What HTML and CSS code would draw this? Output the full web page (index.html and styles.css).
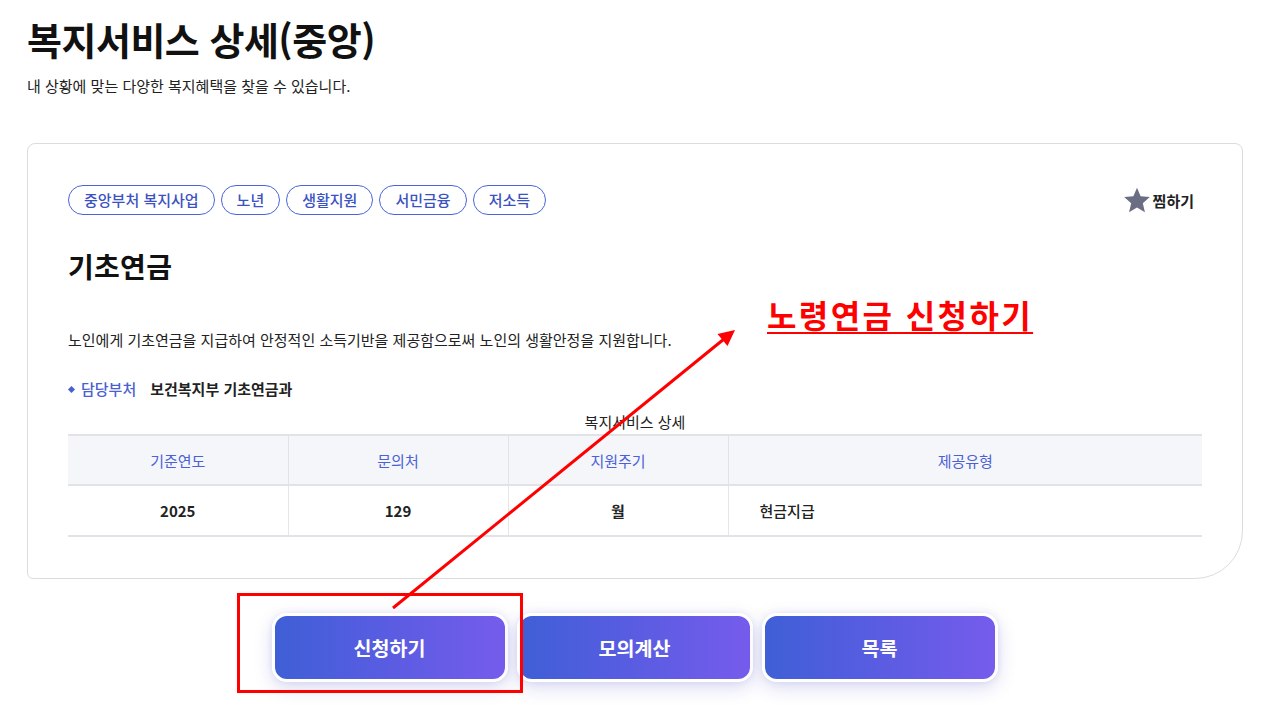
FILE: index.html
```html
<!DOCTYPE html>
<html lang="ko">
<head>
<meta charset="utf-8">
<title>복지서비스 상세(중앙)</title>
<link rel="stylesheet" href="styles.css">
</head>
<body>
<div class="page">
  <header class="head">
    <h1 class="title">복지서비스 상세(중앙)</h1>
    <p class="subtitle">내 상황에 맞는 다양한 복지혜택을 찾을 수 있습니다.</p>
  </header>

  <section class="card">
    <div class="card-top">
      <ul class="tags">
        <li class="tag">중앙부처 복지사업</li>
        <li class="tag">노년</li>
        <li class="tag">생활지원</li>
        <li class="tag">서민금융</li>
        <li class="tag">저소득</li>
      </ul>
      <button class="wish" type="button">
        <svg class="star" viewBox="0 0 24 24" width="28" height="28"><path d="M12 1.5l3.1 7.3 7.9.7-6 5.2 1.8 7.8L12 18.4l-6.8 4.1L7 14.7 1 9.5l7.9-.7z" fill="#6b6e82"/></svg>
        <span>찜하기</span>
      </button>
    </div>

    <h2 class="svc-name">기초연금</h2>
    <p class="desc">노인에게 기초연금을 지급하여 안정적인 소득기반을 제공함으로써 노인의 생활안정을 지원합니다.</p>

    <div class="dept">
      <span class="dept-label">담당부처</span>
      <span class="dept-value">보건복지부 기초연금과</span>
    </div>

    <table class="info">
      <caption>복지서비스 상세</caption>
      <thead>
        <tr>
          <th class="c1">기준연도</th>
          <th class="c2">문의처</th>
          <th class="c3">지원주기</th>
          <th class="c4">제공유형</th>
        </tr>
      </thead>
      <tbody>
        <tr>
          <td class="center">2025</td>
          <td class="center">129</td>
          <td class="center">월</td>
          <td class="left">현금지급</td>
        </tr>
      </tbody>
    </table>
  </section>

  <div class="actions">
    <button class="btn" type="button">신청하기</button>
    <button class="btn" type="button">모의계산</button>
    <button class="btn" type="button">목록</button>
  </div>
</div>

<div class="note">노령연금 신청하기</div>
<svg class="overlay" width="1267" height="706" viewBox="0 0 1267 706">
  <rect x="238.5" y="594.5" width="283" height="97" fill="none" stroke="#ff0000" stroke-width="3"/>
  <line x1="393" y1="608" x2="724" y2="339" stroke="#ff0000" stroke-width="3"/>
  <polygon points="735,330 727.5,346 717.5,334" fill="#ff0000"/>
</svg>
</body>
</html>
```
FILE: styles.css
```css
* { box-sizing: border-box; }
html, body { margin: 0; padding: 0; background: #fff; }
body {
  font-family: "Noto Sans CJK KR", "Noto Sans", sans-serif;
  color: #111;
  width: 1267px;
  height: 706px;
  overflow: hidden;
  position: relative;
}
.page { padding: 0 24px 0 27px; }

.head { padding-top: 12px; }
.title {
  margin: 0;
  font-size: 38px;
  line-height: 54px;
  font-weight: 700;
  letter-spacing: -0.5px;
  color: #111;
}
.subtitle {
  margin: 10px 0 0;
  font-size: 15px;
  line-height: 20px;
  color: #222;
}

.card {
  margin-top: 47px;
  width: 1216px;
  border: 1px solid #dcdcdc;
  border-radius: 8px 8px 48px 6px;
  padding: 41px 40px 41px 40px;
}
.card-top {
  display: flex;
  justify-content: space-between;
  align-items: center;
}
.tags {
  list-style: none;
  margin: 0;
  padding: 0;
  display: flex;
  gap: 6px;
}
.tag {
  height: 30px;
  line-height: 28px;
  padding: 0 15px;
  border: 1px solid #4a64d8;
  border-radius: 15px;
  font-size: 15px;
  font-weight: 500;
  color: #3c52c2;
}
.wish {
  display: flex;
  align-items: center;
  gap: 2px;
  margin-right: 8px;
  background: none;
  border: 0;
  padding: 0;
  font-family: inherit;
  font-size: 15px;
  font-weight: 700;
  color: #222;
}
.svc-name {
  margin: 33px 0 0;
  font-size: 28px;
  line-height: 36px;
  font-weight: 700;
  letter-spacing: 0.3px;
}
.desc {
  margin: 45px 0 0;
  font-size: 15px;
  line-height: 22px;
  color: #222;
}
.dept {
  margin-top: 27px;
  display: flex;
  align-items: center;
  font-size: 15px;
  line-height: 22px;
}
.dept-label {
  position: relative;
  padding-left: 13px;
  color: #4a5fd0;
  font-weight: 500;
}
.dept-label::before {
  content: "";
  position: absolute;
  left: 1px;
  top: 9px;
  width: 5px;
  height: 5px;
  background: #4a5fd0;
  transform: rotate(45deg);
}
.dept-value {
  margin-left: 14px;
  font-weight: 700;
  color: #222;
}

.info {
  width: 1134px;
  margin-top: 11px;
  border-collapse: collapse;
  table-layout: fixed;
  font-size: 15px;
}
.info caption {
  font-size: 15px;
  line-height: 22px;
  color: #222;
  padding-bottom: 1px;
  text-align: center;
}
.info thead tr {
  background: #f5f6fa;
  border-top: 2px solid #e2e3e7;
  border-bottom: 2px solid #e2e3e7;
}
.info th {
  height: 50px;
  font-weight: 400;
  color: #4a62d6;
  border-left: 1px solid #e2e3e7;
  text-align: center;
}
.info th:first-child, .info td:first-child { border-left: 0; }
.info .c1, .info .c2, .info .c3 { width: 220px; }
.info tbody tr { border-bottom: 2px solid #e2e3e7; }
.info td {
  height: 51px;
  font-weight: 700;
  color: #222;
  border-left: 1px solid #e6e6e6;
}
.info td.center { text-align: center; }
.info td.left { text-align: left; padding-left: 31px; font-weight: 500; }

.actions {
  margin-top: 34px;
  display: flex;
  justify-content: center;
  gap: 9px;
  margin-left: -25px;
  margin-right: -24px;
}
.btn {
  width: 236px;
  height: 69px;
  border: 3px solid #fff;
  border-radius: 15px;
  background: linear-gradient(90deg, #3f5fd6 0%, #5a5ce2 50%, #765cec 100%);
  color: #fff;
  font-family: inherit;
  font-size: 19.5px;
  font-weight: 700;
  box-shadow: 0 6px 18px rgba(90, 90, 200, 0.22), 0 0 6px rgba(90, 90, 200, 0.12);
}

.note {
  position: absolute;
  left: 767px;
  top: 292px;
  font-size: 32px;
  line-height: 44px;
  font-weight: 700;
  color: #ff0000;
  letter-spacing: 2.4px;
  text-decoration: underline;
  text-decoration-thickness: 2px;
  text-underline-offset: 4px;
}
.overlay {
  position: absolute;
  left: 0;
  top: 0;
  pointer-events: none;
}
```
